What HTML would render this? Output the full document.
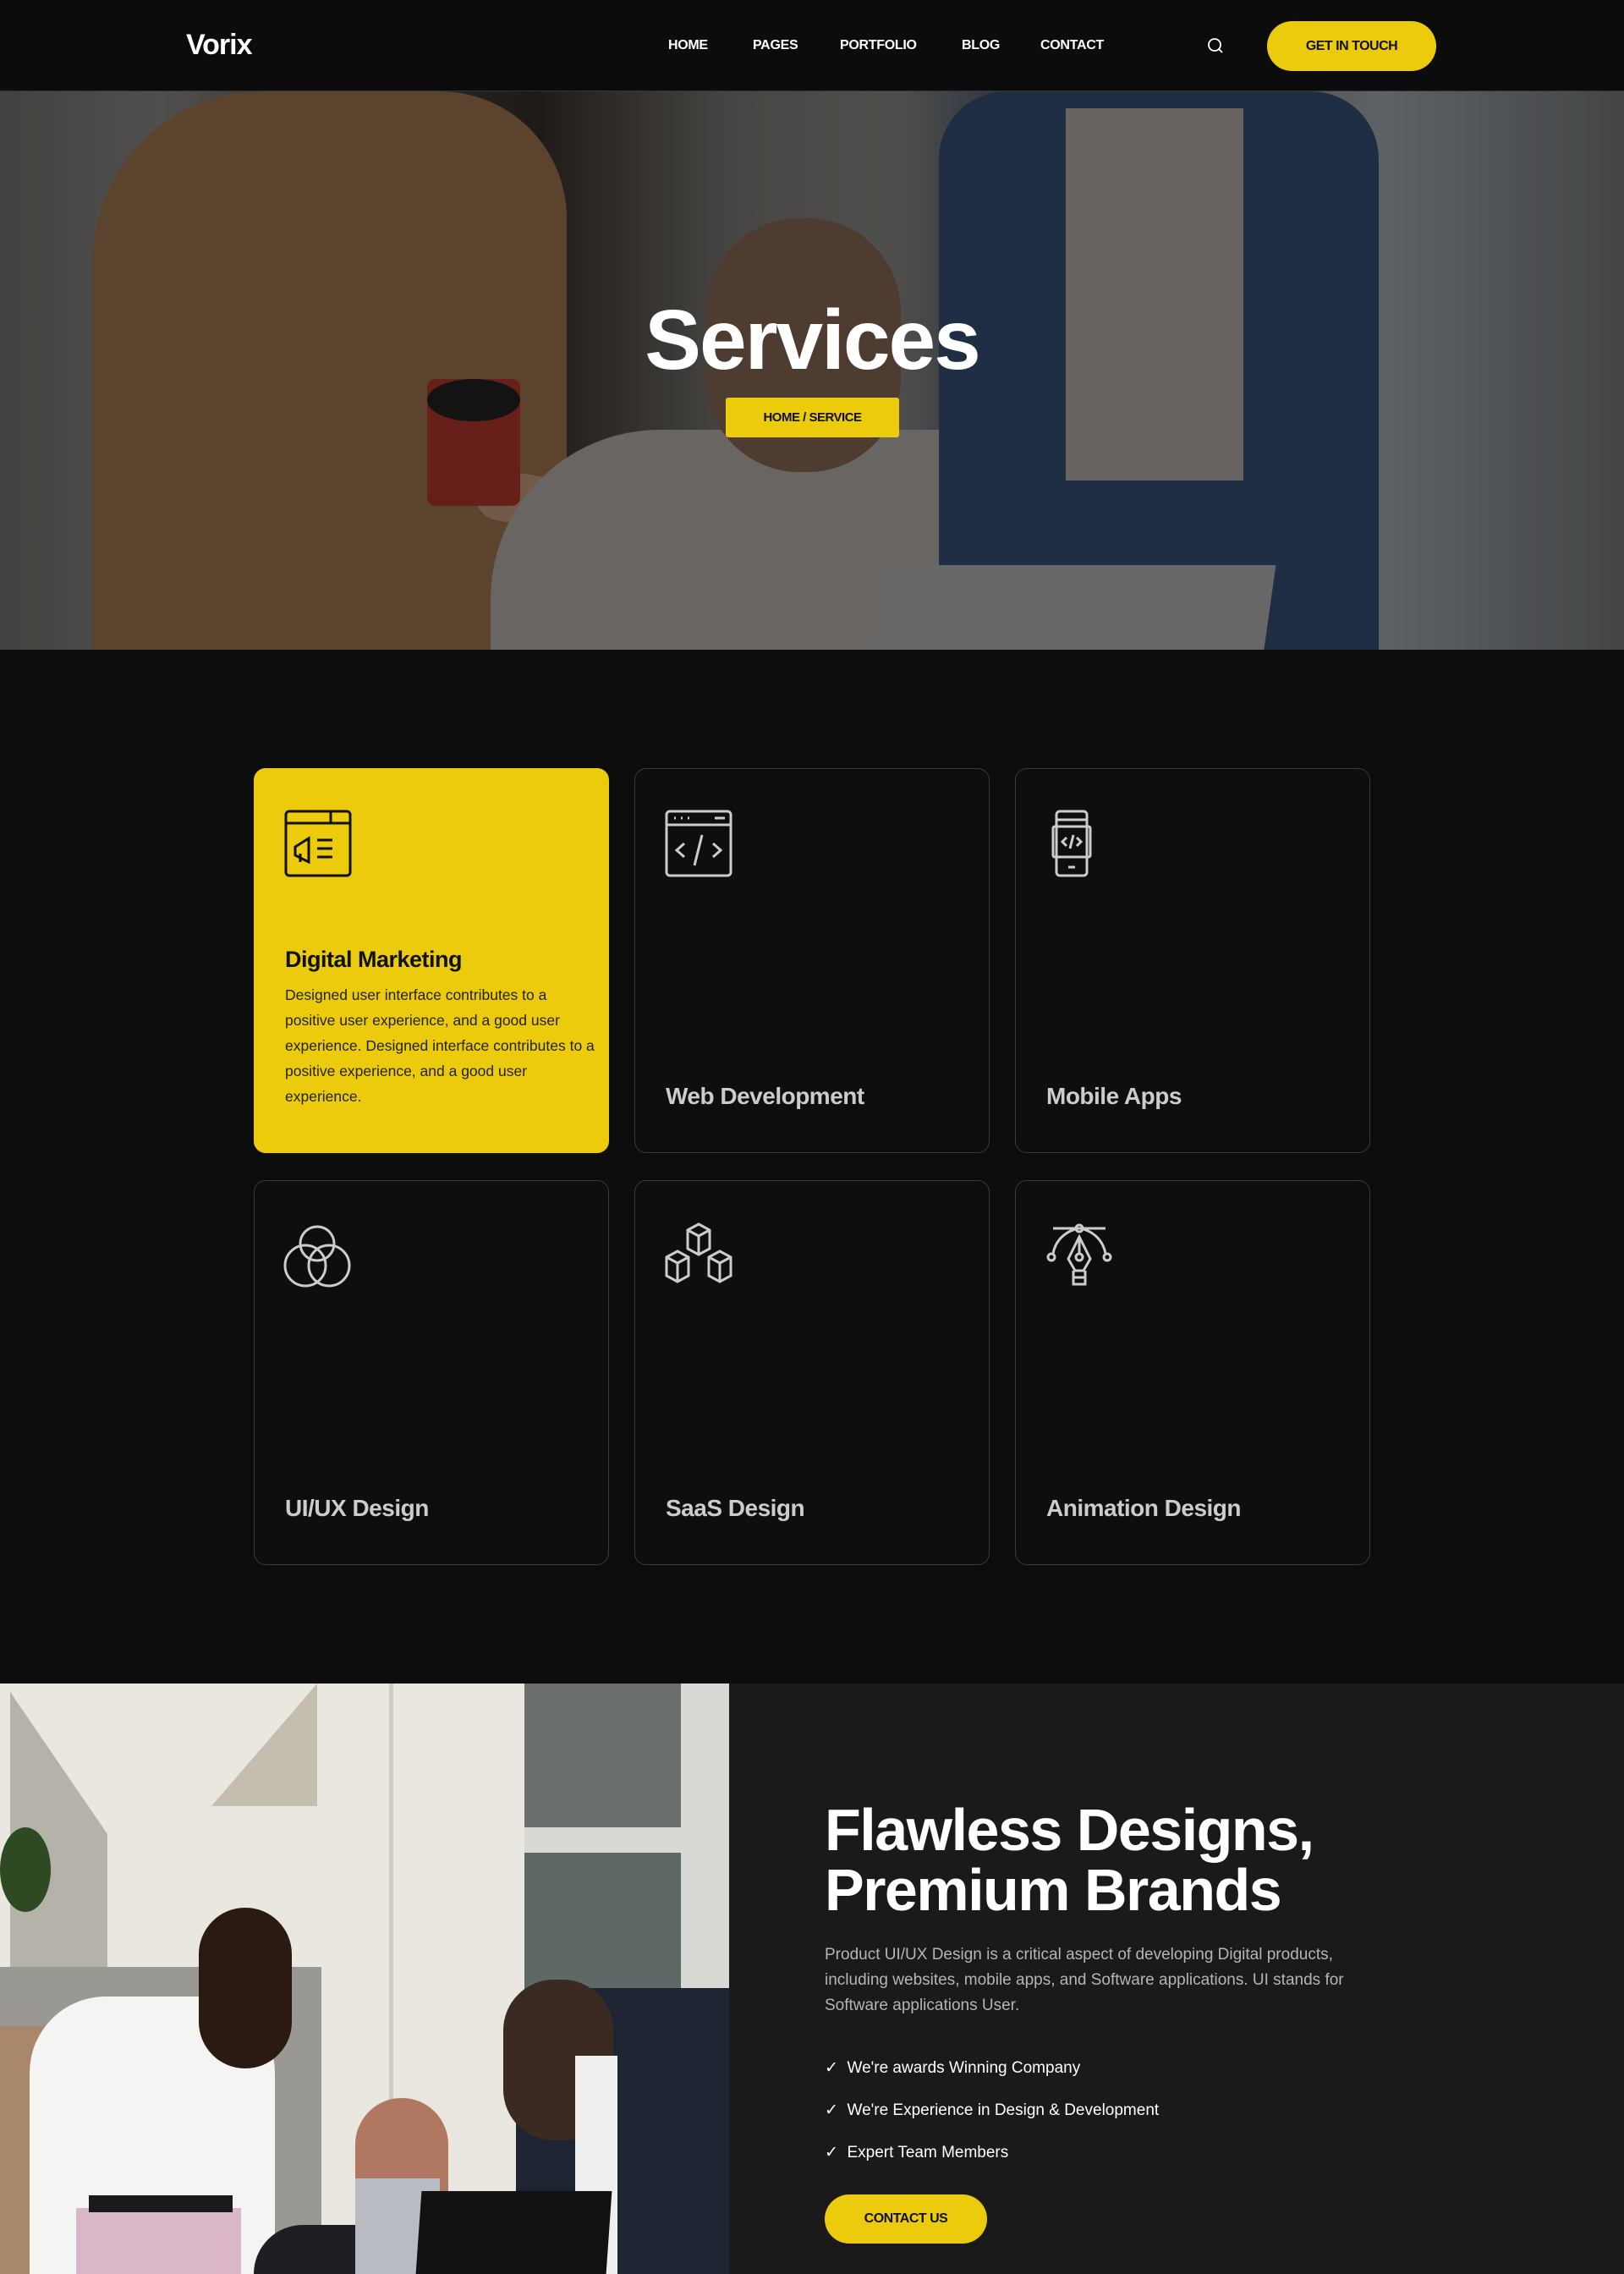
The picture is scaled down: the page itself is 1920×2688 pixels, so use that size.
<!DOCTYPE html>
<html><head><meta charset="utf-8"><style>
*{margin:0;padding:0;box-sizing:border-box}
body{width:1920px;height:2688px;background:#0d0d0d;font-family:"Liberation Sans",sans-serif;overflow:hidden;position:relative}
.nav{position:absolute;left:0;top:0;width:1920px;height:108px;background:#0c0c0c;border-bottom:1px solid #333}
.logo{position:absolute;left:220px;top:34px;color:#fff;font-size:34px;font-weight:bold;letter-spacing:-1px}
.nav a{position:absolute;top:45px;color:#fff;font-size:16px;font-weight:bold;letter-spacing:-0.3px}
.btn{position:absolute;background:#eccb0c;color:#111;font-weight:bold;display:flex;align-items:center;justify-content:center;letter-spacing:-0.5px}
.hero{position:absolute;left:0;top:108px;width:1920px;height:660px;overflow:hidden;background:#4a4540}
.hero .dark{position:absolute;inset:0;background:rgba(0,0,0,0.25)}
.title{position:absolute;left:0;width:1920px;top:345px;text-align:center;color:#fff;font-size:100px;font-weight:bold;letter-spacing:-2px}
.card{position:absolute;width:420px;height:455px;border:1px solid #3a3a3a;border-radius:14px;background:#0e0e0e}
.card.y{background:#eccb0c;border-color:#eccb0c}
.card svg{position:absolute;left:34px;top:48px}
.card h3{position:absolute;left:36px;bottom:50px;color:#ccc;font-size:28px;font-weight:bold;letter-spacing:-0.5px}
.card.y h3{color:#111;bottom:auto;top:210px;font-size:27px}
.card p{position:absolute;left:36px;top:252px;width:370px;color:#222;font-size:17.5px;line-height:30px}
.right{position:absolute;left:862px;top:1990px;width:1058px;height:698px;background:#1a1a1a}
</style></head><body>
<div class="nav">
<div class="logo">Vorix</div>
<a style="left:790px">HOME</a><a style="left:890px">PAGES</a><a style="left:993px">PORTFOLIO</a><a style="left:1137px">BLOG</a><a style="left:1230px">CONTACT</a>
<svg style="position:absolute;left:1425px;top:42px" width="24" height="24" viewBox="0 0 24 24" fill="none" stroke="#fff" stroke-width="1.8"><circle cx="11" cy="11" r="7"/><path d="M16 16l4 4"/></svg>
<div class="btn" style="left:1498px;top:25px;width:200px;height:59px;border-radius:30px;font-size:16px">GET IN TOUCH</div>
</div>
<div class="hero">
<div style="position:absolute;left:0;top:0;width:1920px;height:660px;background:linear-gradient(90deg,#5a5855 0%,#6b6a68 10%,#3a3430 25%,#2a2420 33%,#5f5d5a 45%,#6a6966 55%,#3e4a5a 62%,#6a6a6a 75%,#7d8388 85%,#5a5c5e 100%)"></div>
<div style="position:absolute;left:110px;top:0;width:560px;height:660px;background:#7a5a3e;border-radius:200px 150px 0 0"></div>
<div style="position:absolute;left:560px;top:470px;width:320px;height:60px;background:#9a7860;border-radius:30px;transform:rotate(10deg)"></div>
<div style="position:absolute;left:505px;top:340px;width:110px;height:150px;background:#8a2a22;border-radius:10px"></div>
<div style="position:absolute;left:505px;top:340px;width:110px;height:50px;background:#1a1a1a;border-radius:50%"></div>
<div style="position:absolute;left:580px;top:400px;width:760px;height:300px;background:#8b8783;border-radius:200px 200px 0 0"></div>
<div style="position:absolute;left:835px;top:150px;width:230px;height:300px;background:#6a5040;border-radius:110px"></div>
<div style="position:absolute;left:1110px;top:0;width:520px;height:660px;background:#2a3e58;border-radius:80px 80px 0 0"></div>
<div style="position:absolute;left:1260px;top:20px;width:210px;height:440px;background:#8b8580"></div>
<div style="position:absolute;left:1040px;top:560px;width:460px;height:120px;background:#8a8a8a;transform:skewX(-8deg)"></div>
<div class="dark"></div>
</div>
<div class="title">Services</div>
<div class="btn" style="left:858px;top:470px;width:205px;height:47px;border-radius:3px;font-size:15px">HOME / SERVICE</div>

<div class="card y" style="left:300px;top:908px">
<svg width="82" height="82" viewBox="0 0 82 82" fill="none" stroke="#111" stroke-width="3"><rect x="3" y="2" width="76" height="76" rx="4"/><path d="M3 16h76M56 2v14M14 44l16-10v28l-16-8zM14 44v10M20 52v10M40 36h18M40 46h18M40 56h18"/></svg>
<h3>Digital Marketing</h3>
<p>Designed user interface contributes to a positive user experience, and a good user experience. Designed interface contributes to a positive experience, and a good user experience.</p>
</div>
<div class="card" style="left:750px;top:908px">
<svg width="82" height="82" viewBox="0 0 82 82" fill="none" stroke="#ccc" stroke-width="3"><rect x="3" y="2" width="76" height="76" rx="4"/><path d="M3 18h76M12 10h2M20 10h2M28 10h2M60 10h12M24 40l-9 8 9 8M58 40l9 8-9 8M45 30l-9 36"/></svg>
<h3>Web Development</h3></div>
<div class="card" style="left:1200px;top:908px">
<svg width="82" height="82" viewBox="0 0 82 82" fill="none" stroke="#ccc" stroke-width="3"><rect x="14" y="2" width="36" height="76" rx="4"/><rect x="10" y="20" width="44" height="36" rx="2"/><path d="M14 12h36M28 68h8M26 33l-5 5 5 5M38 33l5 5-5 5M34 30l-4 16"/></svg>
<h3>Mobile Apps</h3></div>
<div class="card" style="left:300px;top:1395px">
<svg width="82" height="82" viewBox="0 0 82 82" fill="none" stroke="#ccc" stroke-width="3"><circle cx="40" cy="26" r="20"/><circle cx="26" cy="52" r="24"/><circle cx="54" cy="52" r="24"/></svg>
<h3>UI/UX Design</h3></div>
<div class="card" style="left:750px;top:1395px">
<svg width="82" height="82" viewBox="0 0 82 82" fill="none" stroke="#ccc" stroke-width="3"><path d="M28 10l13-7 13 7v22l-13 7-13-7zM28 10l13 7 13-7M41 17v22M3 42l13-7 13 7v22l-13 7-13-7zM3 42l13 7 13-7M16 49v22M53 42l13-7 13 7v22l-13 7-13-7zM53 42l13 7 13-7M66 49v22"/></svg>
<h3>SaaS Design</h3></div>
<div class="card" style="left:1200px;top:1395px">
<svg width="82" height="82" viewBox="0 0 82 82" fill="none" stroke="#ccc" stroke-width="3"><path d="M10 8h62"/><circle cx="41" cy="8" r="4"/><path d="M36 9C20 14 12 26 10 38M46 9c16 5 24 17 26 29"/><circle cx="8" cy="42" r="4"/><circle cx="74" cy="42" r="4"/><path d="M41 18L28 44l8 14h10l8-14zM41 18v20"/><circle cx="41" cy="42" r="4"/><path d="M34 58v16h14V58M34 66h14"/></svg>
<h3>Animation Design</h3></div>

<div style="position:absolute;left:0;top:1990px;width:862px;height:698px;overflow:hidden;background:#e9e7e0">
<div style="position:absolute;left:12px;top:10px;width:115px;height:420px;background:#b5b2aa;clip-path:polygon(0 0,100% 40%,100% 100%,0 100%)"></div>
<div style="position:absolute;left:250px;top:0;width:125px;height:145px;background:#c5bdb0;clip-path:polygon(100% 0,100% 100%,0 100%)"></div>
<div style="position:absolute;left:0;top:335px;width:380px;height:363px;background:#9a9893"></div>
<div style="position:absolute;left:460px;top:0;width:5px;height:698px;background:#d0cdc6"></div>
<div style="position:absolute;left:620px;top:0;width:242px;height:698px;background:#d8d8d4"></div>
<div style="position:absolute;left:620px;top:0;width:185px;height:170px;background:#6b6f6c"></div>
<div style="position:absolute;left:620px;top:200px;width:185px;height:250px;background:#5e6864"></div>
<div style="position:absolute;left:0;top:405px;width:75px;height:293px;background:#a9876a"></div>
<div style="position:absolute;left:0;top:170px;width:60px;height:100px;background:#2d4a22;border-radius:50%"></div>
<div style="position:absolute;left:35px;top:370px;width:290px;height:328px;background:#f4f4f2;border-radius:90px 90px 0 0"></div>
<div style="position:absolute;left:235px;top:265px;width:110px;height:190px;background:#2a1a12;border-radius:55px"></div>
<div style="position:absolute;left:90px;top:620px;width:195px;height:78px;background:#d9b7c8"></div>
<div style="position:absolute;left:105px;top:605px;width:170px;height:20px;background:#1a1a1a"></div>
<div style="position:absolute;left:420px;top:490px;width:110px;height:200px;background:#b07860;border-radius:55px"></div>
<div style="position:absolute;left:300px;top:640px;width:300px;height:58px;background:#1e1f24;border-radius:60px 60px 0 0"></div>
<div style="position:absolute;left:420px;top:585px;width:100px;height:113px;background:#b8bcc2"></div>
<div style="position:absolute;left:610px;top:360px;width:252px;height:338px;background:#1f2433;border-radius:80px 0 0 0"></div>
<div style="position:absolute;left:595px;top:350px;width:130px;height:190px;background:#3a2a22;border-radius:60px"></div>
<div style="position:absolute;left:680px;top:440px;width:50px;height:258px;background:#efefef"></div>
<div style="position:absolute;left:495px;top:600px;width:225px;height:98px;background:#111;transform:skewX(-4deg)"></div>
</div>

<div class="right">
<div style="position:absolute;left:113px;top:138px;color:#fff;font-size:70px;font-weight:bold;line-height:71px;letter-spacing:-1.5px">Flawless Designs,<br>Premium Brands</div>
<div style="position:absolute;left:113px;top:306px;width:650px;color:#b5b5b5;font-size:19px;line-height:30px">Product UI/UX Design is a critical aspect of developing Digital products, including websites, mobile apps, and Software applications. UI stands for Software applications User.</div>
<div style="position:absolute;left:113px;top:430px;color:#fff;font-size:19px;line-height:50px">
<div>✓&nbsp;&nbsp;We're awards Winning Company</div>
<div>✓&nbsp;&nbsp;We're Experience in Design &amp; Development</div>
<div>✓&nbsp;&nbsp;Expert Team Members</div>
</div>
<div class="btn" style="left:113px;top:604px;width:192px;height:58px;border-radius:30px;font-size:16px">CONTACT US</div>
</div>
</body></html>
